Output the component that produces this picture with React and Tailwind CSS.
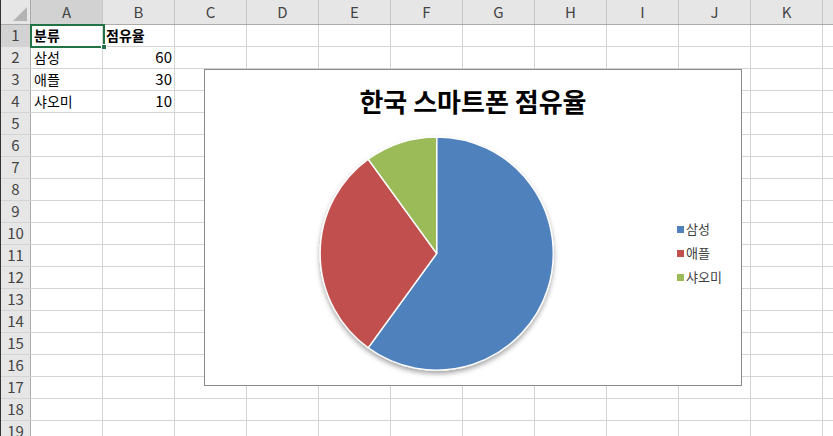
import React from "react";

const cols = ["A", "B", "C", "D", "E", "F", "G", "H", "I", "J", "K", ""];
const data = {
  1: ["분류", "점유율"],
  2: ["삼성", 60],
  3: ["애플", 30],
  4: ["샤오미", 10],
};
const rows = Array.from({ length: 19 }, (_, i) => i + 1);

const font = { fontFamily: '"Noto Sans CJK KR", "Noto Sans", sans-serif' };

const Pie = () => (
  <svg width="537" height="316" className="absolute left-0 top-0">
    <defs>
      <filter id="sh" x="-20%" y="-20%" width="140%" height="150%">
        <feDropShadow dx="0" dy="3" stdDeviation="2.5" floodColor="#000" floodOpacity="0.35" />
      </filter>
    </defs>
    <g filter="url(#sh)" stroke="#fff" strokeWidth="1.3" strokeLinejoin="round">
      <path d="M231.7 183.5 L231.7 67 A116.5 116.5 0 1 1 163.22 277.75 Z" fill="#4f81bd" />
      <path d="M231.7 183.5 L163.22 277.75 A116.5 116.5 0 0 1 163.22 89.25 Z" fill="#c0504d" />
      <path d="M231.7 183.5 L163.22 89.25 A116.5 116.5 0 0 1 231.7 67 Z" fill="#9bbb59" />
    </g>
  </svg>
);

const Chart = () => (
  <div className="absolute left-[203px] top-[69px] w-[538px] h-[317px] bg-white border border-[#8a8a8a]" style={font}>
    <Pie />
    <div className="absolute left-0 right-0 top-[13px] text-center text-[26px] font-bold text-black leading-[36px]">
      한국 스마트폰 점유율
    </div>
    <div className="absolute left-[472px] top-[149px] flex flex-col gap-[4px] text-[13px] text-[#404040]">
      {[
        ["삼성", "bg-[#4f81bd]"],
        ["애플", "bg-[#c0504d]"],
        ["샤오미", "bg-[#9bbb59]"],
      ].map(([t, c]) => (
        <div key={t} className="flex items-center gap-[2px] h-[20px]">
          <span className={`w-[7px] h-[7px] ${c}`} />
          <span>{t}</span>
        </div>
      ))}
    </div>
  </div>
);

export default function App() {
  return (
    <div className="relative w-[833px] h-[436px] overflow-hidden bg-white border-l border-[#333]" style={font}>
      <div className="flex h-[25px] bg-[#e6e6e6] border-b border-[#ababab]">
        <div className="relative w-[30px] shrink-0 border-r border-[#ababab]">
          <div className="absolute right-[3px] bottom-[3px] w-0 h-0 border-l-[14px] border-l-transparent border-b-[14px] border-b-[#b4b4b4]" />
        </div>
        {cols.map((c, i) => (
          <div
            key={i}
            className={`w-[72px] shrink-0 flex items-center justify-center text-[15px] text-[#444] border-r border-[#c8c8c8] ${i === 0 ? "bg-[#d2d2d2]" : ""}`}
          >
            {c}
          </div>
        ))}
      </div>
      {rows.map((r) => (
        <div key={r} className="flex h-[22px] border-b border-[#d4d4d4]">
          <div
            className={`w-[30px] shrink-0 flex items-center justify-center text-[15px] text-[#444] border-r border-[#ababab] ${r === 1 ? "bg-[#d2d2d2]" : "bg-[#e6e6e6]"}`}
          >
            {r}
          </div>
          {cols.map((c, i) => {
            const v = data[r] ? data[r][i] : undefined;
            const num = typeof v === "number";
            return (
              <div
                key={i}
                className={`w-[72px] shrink-0 flex items-center px-[3px] text-black border-r border-[#d4d4d4] ${num ? "justify-end text-[15px] pr-[2px]" : "text-[14px]"} ${r === 1 ? "font-bold" : ""}`}
              >
                {v}
              </div>
            );
          })}
        </div>
      ))}
      <div className="absolute left-[29px] top-[24px] w-[75px] h-[24px] border-2 border-[#217346]" />
      <div className="absolute left-[100px] top-[44px] w-[6px] h-[6px] bg-[#217346] border border-white" />
      <Chart />
    </div>
  );
}
